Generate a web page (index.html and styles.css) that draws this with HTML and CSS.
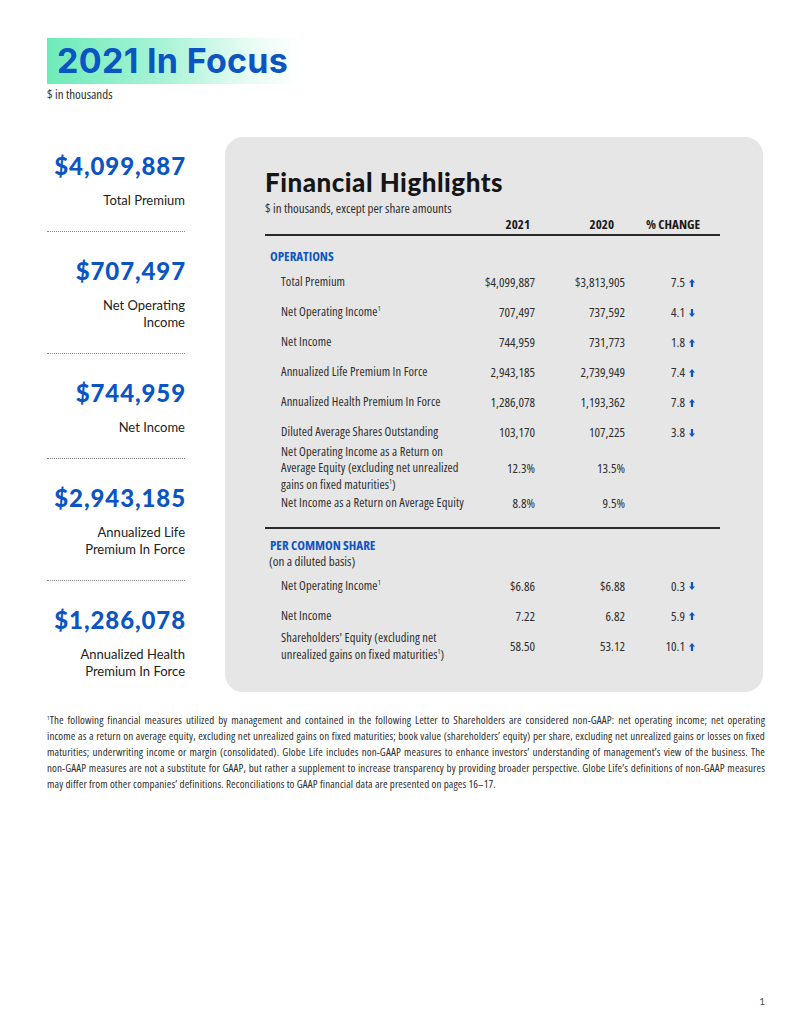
FILE: index.html
```html
<!DOCTYPE html>
<html lang="en">
<head>
<meta charset="utf-8">
<title>2021 In Focus</title>
<link rel="stylesheet" href="styles.css">
</head>
<body>
<div class="page">
  <header class="top">
    <h1 class="banner">2021 In Focus</h1>
    <p class="unit">$ in thousands</p>
  </header>

  <div class="main">
    <aside class="stats">
      <div class="stat">
        <div class="stat-num">$4,099,887</div>
        <div class="stat-label">Total Premium</div>
      </div>
      <div class="stat">
        <div class="stat-num">$707,497</div>
        <div class="stat-label">Net Operating<br>Income</div>
      </div>
      <div class="stat">
        <div class="stat-num">$744,959</div>
        <div class="stat-label">Net Income</div>
      </div>
      <div class="stat">
        <div class="stat-num">$2,943,185</div>
        <div class="stat-label">Annualized Life<br>Premium In Force</div>
      </div>
      <div class="stat">
        <div class="stat-num">$1,286,078</div>
        <div class="stat-label">Annualized Health<br>Premium In Force</div>
      </div>
    </aside>

    <section class="card">
      <h2 class="card-title">Financial Highlights</h2>
      <p class="card-sub">$ in thousands, except per share amounts</p>
      <div class="row head">
        <span></span>
        <span class="h1">2021</span>
        <span class="h2">2020</span>
        <span class="h3">% CHANGE</span>
      </div>

      <div class="section-title ops">OPERATIONS</div>
      <div class="row"><span class="lbl">Total Premium</span><span class="v">$4,099,887</span><span class="v">$3,813,905</span><span class="v">7.5</span><span class="arr"><svg viewBox="0 0 6 8"><path d="M3 0L6 3.6H4.1V8H1.9V3.6H0Z"/></svg></span></div>
      <div class="row"><span class="lbl">Net Operating Income<sup>1</sup></span><span class="v">707,497</span><span class="v">737,592</span><span class="v">4.1</span><span class="arr"><svg viewBox="0 0 6 8"><path d="M3 8L6 4.4H4.1V0H1.9V4.4H0Z"/></svg></span></div>
      <div class="row"><span class="lbl">Net Income</span><span class="v">744,959</span><span class="v">731,773</span><span class="v">1.8</span><span class="arr"><svg viewBox="0 0 6 8"><path d="M3 0L6 3.6H4.1V8H1.9V3.6H0Z"/></svg></span></div>
      <div class="row"><span class="lbl">Annualized Life Premium In Force</span><span class="v">2,943,185</span><span class="v">2,739,949</span><span class="v">7.4</span><span class="arr"><svg viewBox="0 0 6 8"><path d="M3 0L6 3.6H4.1V8H1.9V3.6H0Z"/></svg></span></div>
      <div class="row"><span class="lbl">Annualized Health Premium In Force</span><span class="v">1,286,078</span><span class="v">1,193,362</span><span class="v">7.8</span><span class="arr"><svg viewBox="0 0 6 8"><path d="M3 0L6 3.6H4.1V8H1.9V3.6H0Z"/></svg></span></div>
      <div class="row"><span class="lbl">Diluted Average Shares Outstanding</span><span class="v">103,170</span><span class="v">107,225</span><span class="v">3.8</span><span class="arr"><svg viewBox="0 0 6 8"><path d="M3 8L6 4.4H4.1V0H1.9V4.4H0Z"/></svg></span></div>
      <div class="row multi three"><span class="lbl">Net Operating Income as a Return on<br>Average Equity (excluding net unrealized<br>gains on fixed maturities<sup>1</sup>)</span><span class="v">12.3%</span><span class="v">13.5%</span><span class="v"></span><span class="arr"></span></div>
      <div class="row last"><span class="lbl">Net Income as a Return on Average Equity</span><span class="v">8.8%</span><span class="v">9.5%</span><span class="v"></span><span class="arr"></span></div>

      <div class="divider"></div>

      <div class="section-title share">PER COMMON SHARE</div>
      <div class="section-note">(on a diluted basis)</div>
      <div class="row"><span class="lbl">Net Operating Income<sup>1</sup></span><span class="v">$6.86</span><span class="v">$6.88</span><span class="v">0.3</span><span class="arr"><svg viewBox="0 0 6 8"><path d="M3 8L6 4.4H4.1V0H1.9V4.4H0Z"/></svg></span></div>
      <div class="row"><span class="lbl">Net Income</span><span class="v">7.22</span><span class="v">6.82</span><span class="v">5.9</span><span class="arr"><svg viewBox="0 0 6 8"><path d="M3 0L6 3.6H4.1V8H1.9V3.6H0Z"/></svg></span></div>
      <div class="row multi two"><span class="lbl">Shareholders' Equity (excluding net<br>unrealized gains on fixed maturities<sup>1</sup>)</span><span class="v">58.50</span><span class="v">53.12</span><span class="v">10.1</span><span class="arr"><svg viewBox="0 0 6 8"><path d="M3 0L6 3.6H4.1V8H1.9V3.6H0Z"/></svg></span></div>
    </section>
  </div>

  <footer class="footnote">
    <span class="ln"><sup>1</sup>The following financial measures utilized by management and contained in the following Letter to Shareholders are considered non-GAAP: net operating income; net operating</span>
    <span class="ln">income as a return on average equity, excluding net unrealized gains on fixed maturities; book value (shareholders’ equity) per share, excluding net unrealized gains or losses on fixed</span>
    <span class="ln">maturities; underwriting income or margin (consolidated). Globe Life includes non-GAAP measures to enhance investors’ understanding of management’s view of the business. The</span>
    <span class="ln">non-GAAP measures are not a substitute for GAAP, but rather a supplement to increase transparency by providing broader perspective. Globe Life’s definitions of non-GAAP measures</span>
    <span class="ln end">may differ from other companies’ definitions. Reconciliations to GAAP financial data are presented on pages 16–17.</span>
  </footer>

  <div class="pagenum">1</div>
</div>
</body>
</html>
```

FILE: styles.css
```css
* { box-sizing: border-box; }
html, body { margin: 0; padding: 0; background: #fff; }
body {
  font-family: "Open Sans", "Noto Sans", sans-serif;
  font-stretch: 75%;
  font-weight: 400;
  color: #2e2e2e;
}

.page {
  width: 786px;
  min-height: 1024px;
  padding: 38px 21px 17px 47px;
  display: flex;
  flex-direction: column;
}

.top { display: flex; flex-direction: column; align-items: flex-start; }
.banner {
  margin: 0;
  width: 255px;
  height: 46px;
  padding-left: 10px;
  font-family: Inter, Lato, sans-serif;
  font-stretch: normal;
  font-weight: 700;
  font-size: 34px;
  line-height: 46px;
  color: #0b55c3;
  background: linear-gradient(90deg, #6eebb9 0%, #a8f3d6 45%, #e8fcf4 80%, #ffffff 100%);
  letter-spacing: 0.3px;
  white-space: nowrap;
}
.unit { margin: 3px 0 0; font-size: 13px; line-height: 14px; }

.main { display: flex; gap: 40px; margin-top: 50px; }

.stats { width: 138px; flex: none; text-align: right; }
.stat { padding: 24px 0 22px; border-bottom: 1px dotted #8a8a8a; }
.stat:first-child { padding-top: 0; }
.stat:last-child { border-bottom: none; padding-bottom: 0; }
.stat-num {
  font-family: Lato, "Noto Sans", sans-serif;
  font-stretch: normal;
  font-weight: 900;
  font-size: 24px;
  line-height: 30px;
  color: #0b55c3;
  letter-spacing: 0.9px;
  margin-right: -1px;
  white-space: nowrap;
}
.stat-label {
  margin-top: 11px;
  font-family: Lato, "Noto Sans", sans-serif;
  font-stretch: normal;
  font-weight: 400;
  font-size: 13px;
  line-height: 17px;
  color: #222;
}

.card {
  width: 538px;
  height: 555px;
  margin-top: -14px;
  background: #e6e6e6;
  border-radius: 18px;
  padding: 30px 43px 0 40px;
}
.card-title {
  margin: 0;
  font-family: Lato, "Noto Sans", sans-serif;
  font-stretch: normal;
  font-weight: 900;
  font-size: 26px;
  line-height: 30px;
  letter-spacing: 0.5px;
  color: #161616;
}
.card-sub { margin: 4px 0 0; font-size: 13px; line-height: 14px; }

.row {
  display: grid;
  grid-template-columns: 215px 55px 90px 60px 15px;
  align-items: center;
  min-height: 30px;
  font-size: 13px;
  line-height: 16.5px;
}
.row .lbl { padding-left: 16px; white-space: nowrap; font-size: 12.5px; letter-spacing: 0.1px; }
.row .v { text-align: right; white-space: nowrap; }
.row .arr { display: flex; align-items: center; padding-left: 4px; }
.row .arr svg { width: 6px; height: 8px; fill: #0b55c3; }
sup { font-size: 7px; line-height: 0; vertical-align: 5px; }

.row.head {
  min-height: 16px;
  margin-top: 1px;
  padding-bottom: 1px;
  border-bottom: 2px solid #2a2a2a;
  font-weight: 700;
  color: #1a1a1a;
  grid-template-columns: 215px 55px 90px 75px;
}
.row.head .h1 { text-align: right; padding-right: 5px; }
.row.head .h2 { text-align: right; padding-right: 11px; }
.row.head .h3 { text-align: right; }

.section-title {
  margin-top: 12px;
  padding-left: 5px;
  font-size: 13px;
  line-height: 16px;
  font-weight: 700;
  color: #0b55c3;
}
.section-title.ops { margin-bottom: 4px; }
.section-title.share { margin-top: 8px; line-height: 16px; }
.section-note { margin-top: 1px; padding-left: 4px; font-size: 13px; line-height: 15px; margin-bottom: 2px; }

.row.multi.three { margin: -4px 0 -5px; }
.row.multi.two { margin-top: -1px; }

.divider { border-top: 2px solid #2a2a2a; margin-top: 9px; }

.footnote {
  margin-top: 20px;
  font-size: 11px;
  line-height: 16px;
  letter-spacing: 0.12px;
}
.footnote .ln { display: block; text-align: justify; text-align-last: justify; white-space: nowrap; }
.footnote .ln.end { text-align-last: left; }
.footnote sup { font-size: 6px; vertical-align: 4px; }

.pagenum {
  margin-top: auto;
  align-self: flex-end;
  font-size: 10px;
  color: #555;
  font-family: Lato, sans-serif;
  font-stretch: normal;
}
```
